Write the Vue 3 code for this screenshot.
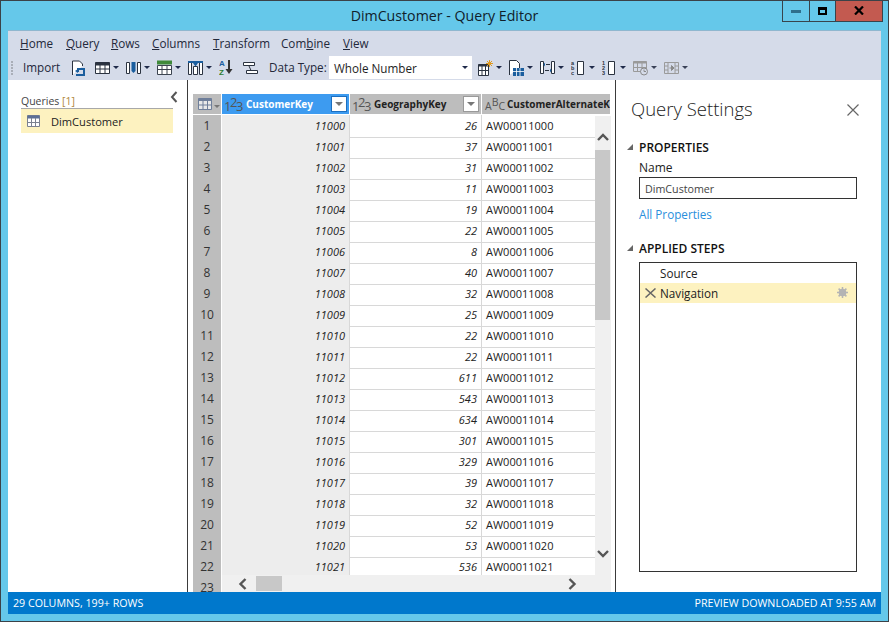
<template>
  <div class="window">
    <header class="titlebar">
      <span class="title">DimCustomer - Query Editor</span>
      <div class="winbtns">
        <button class="winbtn min"><i></i></button>
        <button class="winbtn max"><i></i></button>
        <button class="winbtn close">
          <svg width="10" height="9" viewBox="0 0 10 9"><path d="M1 .5l8 8M9 .5l-8 8" stroke="#000" stroke-width="2.2" fill="none" /></svg>
        </button>
      </div>
    </header>

    <section class="ribbon">
      <nav class="menu">
        <a v-for="m in menu" :key="m.key" :style="{ width: m.w + 'px' }">{{ m.pre }}<u>{{ m.key }}</u>{{ m.post }}</a>
      </nav>
      <div class="tools">
        <span class="grip"></span>
        <span class="import">Import</span>
        <span class="tool plain first">
          <svg width="15" height="16" viewBox="0 0 15 16"><path d="M1.5 15V1h7l3 3v2" fill="#fff" stroke="#2b3340" /><path d="M5 15h8V9H7v3" fill="none" stroke="#1b5e9e" stroke-width="2" /><path d="M4 11l3-2v4z" fill="#1b5e9e" /></svg>
        </span>
        <span class="tool">
          <svg width="15" height="14" viewBox="0 0 15 14"><path d="M.5 1.5h14v11H.5z" fill="#fff" stroke="#2b3340" /><path d="M.5 1.5h14v3H.5z" fill="#2b3340" /><path d="M5 4v8M10 4v8M1 8h13" stroke="#2b3340" /></svg>
          <b></b>
        </span>
        <span class="tool">
          <svg width="15" height="14" viewBox="0 0 15 14"><path d="M.5 1.5h3v11h-3zM11.5 1.5h3v11h-3z" fill="#fff" stroke="#2b3340" /><path d="M5.5 1h4v9l-2 2-2-2z" fill="#1b5e9e" /></svg>
          <b></b>
        </span>
        <span class="tool">
          <svg width="15" height="15" viewBox="0 0 15 15"><path d="M.5 5.500h14v9H.5z" fill="#fff" stroke="#3c4450" /><path d="M0 .5h15v4H0z" fill="#3f8a3a" /><path d="M5 5v9M10 5v9M1 9.500h13" stroke="#3c4450" /></svg>
          <b></b>
        </span>
        <span class="tool">
          <svg width="15" height="15" viewBox="0 0 15 15"><path d="M.5 1.500h3v13h-3zM11.500 1.500h3v13h-3z" fill="#fff" stroke="#2b3340" /><path d="M5.500 6.500h4v8h-4z" fill="#fff" stroke="#2b3340" /><path d="M0 1h15v2H10L7.500 6.500 5 3H0z" fill="#1b5e9e" /></svg>
          <b></b>
        </span>
        <span class="tool plain narrow">
          <svg width="14" height="17" viewBox="0 0 14 17">
            <text x="0" y="7" class="tiny" fill="#1b5e9e">A</text>
            <text x="0" y="15.500" class="tiny" fill="#2f7d2f">Z</text>
            <path d="M10 1v12" stroke="#333" stroke-width="2" /><path d="M6.500 10h7L10 15z" fill="#333" />
          </svg>
        </span>
        <span class="tool plain narrow2">
          <svg width="15" height="14" viewBox="0 0 15 14"><path d="M.5 1.500h11v3H.5zM3.500 9.500h11v3h-11z" fill="#fff" stroke="#2b3340" /><path d="M6 5l2 4.500" stroke="#2b3340" /></svg>
        </span>
        <label class="dtype">Data Type:</label>
        <div class="combo"><span>Whole Number</span><b></b></div>
        <span class="tool">
          <svg width="15" height="16" viewBox="0 0 15 16"><path d="M.5 4.500h10v11H.5z" fill="#fff" stroke="#2b3340" /><path d="M.5 4.500h10v2H.5z" fill="#2b3340" /><path d="M4 6v9M7.500 6v9M1 10.500h9" stroke="#2b3340" /><path d="M11.500 0v7M8 3.500h7M9 1l5 5M14 1L9 6" stroke="#e09a1f" /></svg>
          <b></b>
        </span>
        <span class="tool">
          <svg width="15" height="16" viewBox="0 0 15 16"><path d="M.5 15V.5h7l3 3V8" fill="#fff" stroke="#2b3340" /><path d="M4 8h11v8H4z" fill="#1b5e9e" /><path d="M7.500 8v8M11 8v8M4 11.500h11" stroke="#fff" stroke-width=".8" /></svg>
          <b></b>
        </span>
        <span class="tool">
          <svg width="15" height="15" viewBox="0 0 15 15"><path d="M.5 1.500h3v12h-3zM11.500 1.500h3v12h-3z" fill="#fff" stroke="#2b3340" /><path d="M6 4.500h4M9 10.500H5" stroke="#2b3340" /><path d="M5 2.500L3.500 4.500 5 6.500zM10 8.500l1.500 2-1.500 2z" fill="#1b5e9e" /></svg>
          <b></b>
        </span>
        <span class="tool">
          <svg width="15" height="16" viewBox="0 0 15 16">
            <text x="0" y="5" class="micro">a</text><text x="0" y="10" class="micro">b</text><text x="0" y="15" class="micro">c</text>
            <path d="M6.500 1.500h6v13h-6z" fill="#fff" stroke="#2b3340" />
          </svg>
          <b></b>
        </span>
        <span class="tool">
          <svg width="15" height="16" viewBox="0 0 15 16">
            <text x="0" y="5" class="micro">1</text><text x="0" y="10" class="micro">2</text><text x="0" y="15" class="micro">3</text>
            <path d="M6.500 1.500h6v13h-6z" fill="#fff" stroke="#2b3340" />
          </svg>
          <b></b>
        </span>
        <span class="tool off">
          <svg width="15" height="16" viewBox="0 0 15 16"><path d="M.5 1.500h13v10H.5z" fill="#d5dbe9" stroke="#9a9a9a" /><path d="M.5 1.500h13v2H.5z" fill="#9a9a9a" /><path d="M4.500 3v8M9 3v8M1 7.500h12" stroke="#9a9a9a" /><circle cx="11" cy="11.500" r="3.500" fill="#d5dbe9" stroke="#8a8a8a" /><path d="M11 9.500v2h2" stroke="#8a8a8a" fill="none" /></svg>
          <b></b>
        </span>
        <span class="tool off">
          <svg width="15" height="14" viewBox="0 0 15 14"><path d="M.5 1.500h14v11H.5z" fill="#d5dbe9" stroke="#9a9a9a" /><path d="M4 1v12M11 1v12M1 5h3M1 9h3M11 5h3M11 9h3" stroke="#9a9a9a" /><path d="M5.500 7h3M7.500 4.500L10 7l-2.500 2.500z" stroke="#8a8a8a" fill="#8a8a8a" /></svg>
          <b></b>
        </span>
      </div>
    </section>

    <main class="main">
      <aside class="queries">
        <div class="queries-head">
          <span>Queries <em>[1]</em></span>
          <svg class="collapse" width="8" height="12" viewBox="0 0 8 12"><path d="M6.500 1L2 6l4.500 5" fill="none" stroke="#555" stroke-width="2" /></svg>
        </div>
        <div class="query-item">
          <svg width="13" height="12" viewBox="0 0 13 12"><path d="M.5.500h12v11H.5z" fill="#fff" stroke="#7b8190" /><path d="M.5.500h12v3H.5z" fill="#5c6f96" /><path d="M4.500 3v8M8.500 3v8M1 7.500h11" stroke="#7b8190" /></svg>
          <span>DimCustomer</span>
        </div>
      </aside>

      <section class="gridpane">
        <div class="grid">
          <div class="row head">
            <div class="corner">
              <svg width="14" height="12" viewBox="0 0 14 12"><path d="M.5.500h13v11H.5z" fill="#e8e8e8" stroke="#6f7f9a" /><path d="M.5.500h13v2.500H.5z" fill="#6f7f9a" /><path d="M5 3v8M9.500 3v8M1 7h12" stroke="#6f7f9a" /></svg>
              <b></b>
            </div>
            <div v-for="c in columns" :key="c.name" class="hcell" :class="{ active: c.active, cut: c.text }">
              <span class="typeicon"><i class="lo">{{ c.type[0] }}</i><i class="hi">{{ c.type[1] }}</i><i class="lo">{{ c.type[2] }}</i></span>
              <span class="hname">{{ c.name }}</span>
              <span v-if="!c.text" class="filter"><b></b></span>
            </div>
          </div>
          <div v-for="(r, i) in rows" :key="i" class="row">
            <div class="num">{{ i + 1 }}</div>
            <div class="cell key">{{ 11000 + i }}</div>
            <div class="cell geo">{{ r }}</div>
            <div class="cell alt">AW000{{ 11000 + i }}</div>
          </div>
          <div class="row"><div class="num">23</div></div>
        </div>

        <div class="vscroll">
          <svg class="vup" width="12" height="8" viewBox="0 0 12 8"><path d="M1 7l5-5 5 5" fill="none" stroke="#555" stroke-width="2.400" /></svg>
          <span class="vthumb"></span>
          <svg class="vdown" width="12" height="8" viewBox="0 0 12 8"><path d="M1 1l5 5 5-5" fill="none" stroke="#555" stroke-width="2.400" /></svg>
        </div>
        <div class="hscroll">
          <svg class="hleft" width="9" height="12" viewBox="0 0 9 12"><path d="M7.500 1L2.500 6l5 5" fill="none" stroke="#555" stroke-width="2.400" /></svg>
          <span class="hthumb"></span>
          <svg class="hright" width="9" height="12" viewBox="0 0 9 12"><path d="M1.500 1l5 5-5 5" fill="none" stroke="#555" stroke-width="2.400" /></svg>
        </div>
      </section>

      <aside class="settings">
        <div class="settings-head">
          <h1>Query Settings</h1>
          <svg width="12" height="12" viewBox="0 0 12 12"><path d="M.5.500l11 11M11.500.500l-11 11" stroke="#666" stroke-width="1.200" fill="none" /></svg>
        </div>
        <h2><i class="tri"></i>PROPERTIES</h2>
        <label class="name-label">Name</label>
        <div class="name-input">DimCustomer</div>
        <a class="all-props">All Properties</a>
        <h2 class="steps-title"><i class="tri"></i>APPLIED STEPS</h2>
        <div class="steps">
          <div class="step">Source</div>
          <div class="step current">
            <svg class="del" width="11" height="10" viewBox="0 0 11 10"><path d="M.5.500l10 9M10.500.500l-10 9" stroke="#666" stroke-width="1.500" fill="none" /></svg>
            Navigation
            <svg class="gear" width="11" height="11" viewBox="0 0 11 11"><circle cx="5.500" cy="5.500" r="2.800" fill="none" stroke="#b4b4b4" stroke-width="2" /><path d="M5.500 0v11M0 5.500h11M1.600 1.600l7.800 7.800M9.400 1.600l-7.800 7.800" stroke="#b4b4b4" stroke-width="1.500" /></svg>
          </div>
        </div>
      </aside>
    </main>

    <footer class="status">
      <span>29 COLUMNS, 199+ ROWS</span>
      <span>PREVIEW DOWNLOADED AT 9:55 AM</span>
    </footer>
  </div>
</template>

<script setup>
const menu = [
  { pre: '', key: 'H', post: 'ome', w: 46 },
  { pre: '', key: 'Q', post: 'uery', w: 45 },
  { pre: '', key: 'R', post: 'ows', w: 41 },
  { pre: '', key: 'C', post: 'olumns', w: 61 },
  { pre: '', key: 'T', post: 'ransform', w: 68 },
  { pre: 'Com', key: 'b', post: 'ine', w: 62 },
  { pre: '', key: 'V', post: 'iew', w: 30 },
]

const columns = [
  { name: 'CustomerKey', type: '123', active: true },
  { name: 'GeographyKey', type: '123' },
  { name: 'CustomerAlternateKey', type: 'ABC', text: true },
]

const rows = [26, 37, 31, 11, 19, 22, 8, 40, 32, 25, 22, 22, 611, 543, 634, 301, 329, 39, 32, 52, 53, 536]
</script>

<style>
html, body { margin: 0; background: #65c8ea; }
</style>

<style scoped>
.window {
  width: 889px;
  height: 622px;
  box-sizing: border-box;
  border: 1px solid #3b4248;
  background: #65c8ea;
  display: flex;
  flex-direction: column;
  padding: 0 7px 7px;
  font-family: "Open Sans", "Noto Sans", sans-serif;
  font-size: 12px;
  color: #1e1e1e;
  overflow: hidden;
}
.titlebar {
  height: 29px;
  margin: 0 -7px;
  flex: none;
  display: flex;
  align-items: center;
  justify-content: center;
  position: relative;
}
.title { font-size: 14.2px; color: #10202a; }
.winbtns {
  position: absolute;
  top: -1px;
  right: 5px;
  display: flex;
  height: 22px;
  border: 1px solid #38444c;
  border-top: 0;
  box-sizing: border-box;
}
.winbtn {
  border: 0;
  padding: 0;
  background: none;
  display: flex;
  align-items: center;
  justify-content: center;
  border-right: 1px solid #38444c;
}
.winbtn.min { width: 27px; }
.winbtn.min i { width: 10px; height: 3px; margin-top: 2px; background: #2f6f8c; }
.winbtn.max { width: 26px; }
.winbtn.max i { width: 5px; height: 3px; border: 2px solid #000; border-top-width: 3px; }
.winbtn.close { width: 46px; background: #c35a50; border-right: 0; }

.ribbon {
  flex: none;
  height: 50px;
  background: #d5dbe9;
  border-top: 1px solid #8fb7cf;
  box-sizing: border-box;
  color: #23283a;
  font-size: 11.7px;
}
.menu {
  height: 25px;
  box-sizing: border-box;
  padding: 0 0 2px 12px;
  display: flex;
  align-items: center;
}
.menu a { flex: none; white-space: nowrap; }
.tools {
  height: 23px;
  display: flex;
  align-items: center;
}
.grip {
  width: 2px;
  height: 14px;
  margin-left: 3px;
  background: repeating-linear-gradient(#a9aeb8 0 2px, transparent 2px 3px);
}
.import { margin-left: 10px; width: 48px; line-height: 21px; }
.tool {
  flex: none;
  width: 31px;
  height: 23px;
  display: flex;
  align-items: center;
  box-sizing: border-box;
}
.tool b, .combo b, .corner b, .filter b {
  width: 0;
  height: 0;
  border-left: 3px solid transparent;
  border-right: 3px solid transparent;
  border-top: 3px solid #1f2a4a;
}
.tool b { margin-left: 3px; }
.tool.off b { border-top-color: #3a4258; }
.tool.plain.first { width: 24px; }
.tool.plain.narrow { width: 24px; }
.tool.plain.narrow2 { width: 26px; }
.tiny { font: bold 8px "Liberation Sans", sans-serif; }
.micro { font: bold 5.500px "Liberation Sans", sans-serif; fill: #2b3340; }
.dtype { width: 60px; flex: none; white-space: nowrap; line-height: 21px; }
.combo {
  flex: none;
  width: 143px;
  height: 23px;
  margin-right: 6px;
  background: #fff;
  display: flex;
  align-items: center;
  justify-content: space-between;
  padding: 0 4px 0 5px;
  box-sizing: border-box;
  color: #1e1e1e;
}

.main {
  flex: 1;
  display: flex;
  background: #fff;
  min-height: 0;
}
.queries {
  width: 180px;
  flex: none;
  box-sizing: border-box;
  border-right: 1px solid #3b3b3b;
  padding: 13px 14px 0 13px;
}
.queries-head {
  height: 15px;
  border-bottom: 1px solid #a8a8a8;
  display: flex;
  justify-content: space-between;
  font-size: 10.500px;
  color: #444;
  line-height: 16px;
}
.queries-head em { font-style: normal; color: #b0883c; }
.collapse { margin-top: -2px; margin-right: -5px; }
.query-item {
  height: 24px;
  background: #fdf2c0;
  display: flex;
  align-items: center;
  padding-left: 6px;
  gap: 11px;
  color: #222;
  font-size: 11.100px;
}

.gridpane {
  width: 428px;
  flex: none;
  position: relative;
  overflow: hidden;
  padding: 14px 0 0 5px;
  box-sizing: border-box;
  border-right: 1px solid #3b3b3b;
}
.grid { width: 418px; overflow: hidden; }
.row {
  display: grid;
  grid-template-columns: 29px 128px 132px 129px;
  height: 21px;
  font-size: 11px;
}
.row.head { height: 21px; }
.corner {
  background: #bdbdbd;
  margin-right: 1px;
  display: flex;
  align-items: center;
  justify-content: flex-start;
  padding-left: 5px;
  gap: 2px;
  border-bottom: 1px solid #fff;
}
.corner b { border-top-color: #777; margin-top: 5px; }
.hcell {
  background: #bdbdbd;
  display: flex;
  align-items: center;
  padding-left: 2px;
  margin-right: 1px;
  border-bottom: 1px solid #fff;
  color: #222;
  font-weight: 700;
  font-size: 10px;
  white-space: nowrap;
  overflow: hidden;
}
.hcell.active { background: #3d9bf0; color: #fff; }
.typeicon {
  display: flex;
  width: 22px;
  flex: none;
  font-size: 13px;
  font-weight: 400;
  color: #555;
  line-height: 12px;
}
.typeicon i { font-style: normal; margin-right: -1.500px; }
.cut .typeicon { width: 23px; padding-left: 1px; font-size: 10.500px; box-sizing: border-box; }
.cut .typeicon i { margin-right: 0; }
.typeicon .lo { transform: translateY(2px); }
.typeicon .hi { transform: translateY(-2px); }
.hname { flex: 1; }
.filter {
  width: 14px;
  height: 14px;
  background: #fff;
  border: 1px solid #999;
  display: flex;
  align-items: center;
  justify-content: center;
  margin-right: 2px;
  flex: none;
}
.hcell.active .filter { border-color: #1c6fc0; }
.filter b { border-top-color: #777; border-top-width: 4px; border-left-width: 4px; border-right-width: 4px; }
.num {
  background: #bdbdbd;
  margin-right: 1px;
  border-bottom: 1px solid #d8d8d8;
  text-align: center;
  line-height: 22px;
  font-size: 12px;
  color: #333;
}
.cell {
  border-bottom: 1px solid #d8d8d8;
  border-right: 1px solid #d8d8d8;
  line-height: 22px;
  padding: 0 4px;
  color: #222;
  white-space: nowrap;
}
.key, .geo { text-align: right; font-style: italic; }
.key { background: #ededed; }
.alt { border-right: 0; }

.vscroll {
  position: absolute;
  top: 36px;
  left: 407px;
  width: 16px;
  bottom: 0;
  background: #f0f0f0;
}
.vup { position: absolute; left: 2px; top: 17px; }
.vthumb { position: absolute; left: 0; top: 34px; width: 15px; height: 170px; background: #c8c8c8; }
.vdown { position: absolute; left: 2px; top: 434px; }
.hscroll {
  position: absolute;
  left: 34px;
  width: 389px;
  bottom: 0;
  height: 17px;
  background: #f0f0f0;
}
.hleft { position: absolute; left: 16px; top: 3px; }
.hthumb { position: absolute; left: 34px; top: 1px; width: 26px; height: 15px; background: #c8c8c8; }
.hright { position: absolute; left: 346px; top: 3px; }

.settings {
  flex: 1;
  box-sizing: border-box;
  padding: 0 24px 20px 23px;
  display: flex;
  flex-direction: column;
  min-width: 0;
}
.settings-head {
  display: flex;
  justify-content: space-between;
  align-items: center;
  margin: 16px -2px 16px -8px;
  height: 28px;
}
h1 { font-size: 18.500px; font-weight: 300; margin: 0 0 4px; color: #222; }
h2 {
  margin: 0;
  font-size: 12px;
  font-weight: 600;
  color: #111;
  position: relative;
  line-height: 16px;
}
.tri {
  position: absolute;
  left: -12px;
  top: 4px;
  width: 0;
  height: 0;
  border-left: 6px solid transparent;
  border-bottom: 6px solid #666;
}
.name-label { margin-top: 4px; line-height: 16px; color: #222; }
.name-input {
  margin-top: 1px;
  height: 22px;
  border: 1px solid #333;
  box-sizing: border-box;
  padding-left: 5px;
  line-height: 22px;
  color: #444;
  font-size: 10.700px;
}
.all-props { margin-top: 7px; line-height: 16px; color: #2a8fdc; font-size: 11.700px; }
.steps-title { margin-top: 19px; }
.steps {
  flex: 1;
  margin-top: 5px;
  border: 1px solid #333;
  padding-top: 0;
}
.step {
  height: 20px;
  padding-left: 20px;
  display: flex;
  align-items: center;
  position: relative;
  color: #222;
  font-size: 11.700px;
}
.step.current { background: #fdf2c0; }
.del { position: absolute; left: 5px; top: 5px; }
.gear { position: absolute; right: 8px; top: 4px; }

.status {
  flex: none;
  height: 22px;
  background: #0078cc;
  color: #fff;
  display: flex;
  justify-content: space-between;
  align-items: center;
  padding: 0 5px;
  font-size: 10.700px;
}
</style>
